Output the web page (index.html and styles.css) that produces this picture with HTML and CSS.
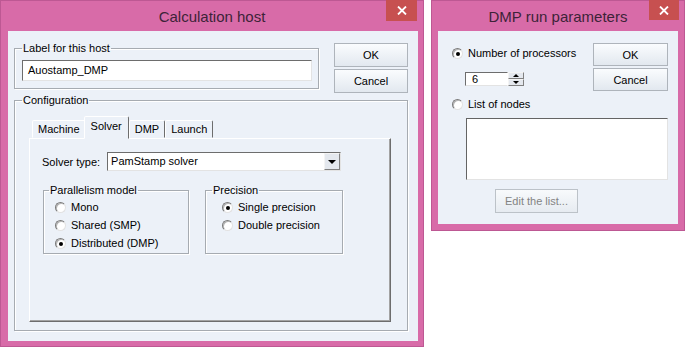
FILE: index.html
```html
<!DOCTYPE html>
<html lang="en">

<head>
    <meta charset="UTF-8">
    <title>Calculation host</title>
    <link rel="stylesheet" href="styles.css">
</head>

<body>
    <!-- Main dialog -->
    <div class="window window-host">
        <div class="titlebar">
            Calculation host
            <span class="close-btn">
                <svg width="10" height="9" viewBox="0 0 10 9"><path d="M1 0.5 L9 8.5 M9 0.5 L1 8.5" stroke="#fff" stroke-width="1.8" fill="none"/></svg>
            </span>
        </div>
        <div class="client host-client">
            <div class="host-row">
                <fieldset class="group group-label">
                    <legend>Label for this host</legend>
                    <div class="textbox">Auostamp_DMP</div>
                </fieldset>
                <div class="btn-col">
                    <button class="btn">OK</button>
                    <button class="btn">Cancel</button>
                </div>
            </div>

            <fieldset class="group group-config">
                <legend>Configuration</legend>
                <div class="tabs">
                    <span class="tab">Machine</span>
                    <span class="tab tab-active">Solver</span>
                    <span class="tab">DMP</span>
                    <span class="tab">Launch</span>
                </div>
                <div class="tab-panel">
                    <div class="solver-row">
                        <span>Solver type:</span>
                        <div class="select">
                            <span class="select-value">PamStamp solver</span>
                            <span class="select-arrow"></span>
                        </div>
                    </div>
                    <div class="groups-row">
                        <fieldset class="group group-parallel">
                            <legend>Parallelism model</legend>
                            <div class="radio-list">
                                <label class="radio-row"><span class="radio"></span>Mono</label>
                                <label class="radio-row"><span class="radio"></span>Shared (SMP)</label>
                                <label class="radio-row"><span class="radio checked"></span>Distributed (DMP)</label>
                            </div>
                        </fieldset>
                        <fieldset class="group group-precision">
                            <legend>Precision</legend>
                            <div class="radio-list">
                                <label class="radio-row"><span class="radio checked"></span>Single precision</label>
                                <label class="radio-row"><span class="radio"></span>Double precision</label>
                            </div>
                        </fieldset>
                    </div>
                </div>
            </fieldset>
        </div>
    </div>

    <!-- DMP parameters dialog -->
    <div class="window window-dmp">
        <div class="titlebar">
            DMP run parameters
            <span class="close-btn">
                <svg width="10" height="9" viewBox="0 0 10 9"><path d="M1 0.5 L9 8.5 M9 0.5 L1 8.5" stroke="#fff" stroke-width="1.8" fill="none"/></svg>
            </span>
        </div>
        <div class="client dmp-client">
            <div class="dmp-top">
                <div class="dmp-procs">
                    <label class="radio-row"><span class="radio checked"></span>Number of processors</label>
                    <div class="spin">
                        <span class="spin-value">6</span>
                        <span class="spin-arrows">
                            <span class="spin-up"></span>
                            <span class="spin-down"></span>
                        </span>
                    </div>
                </div>
                <div class="btn-col btn-col-dmp">
                    <button class="btn">OK</button>
                    <button class="btn">Cancel</button>
                </div>
            </div>
            <label class="radio-row nodes-row"><span class="radio"></span>List of nodes</label>
            <div class="listbox"></div>
            <button class="btn btn-edit" disabled>Edit the list...</button>
        </div>
    </div>
</body>

</html>
```

FILE: styles.css
```css
/* Two Windows 8 style dialogs side by side */
body {
    margin: 0;
    background-color: #fff;
    font-family: 'Liberation Sans', Arial, sans-serif;
    font-size: 11px;
    color: #000;
    display: flex;
    align-items: flex-start;
    gap: 7px;
}

.window {
    position: relative;
    box-sizing: border-box;
    display: flex;
    flex-direction: column;
    background-color: #d86ba8;
    border: 1px solid #bd5893;
}

.window-host {
    width: 424px;
    height: 347px;
}

.window-dmp {
    width: 254px;
    height: 231px;
}

.titlebar {
    height: 30px;
    display: flex;
    align-items: center;
    justify-content: center;
    font-size: 15px;
    color: #3d2338;
}

.close-btn {
    position: absolute;
    top: -1px;
    right: 6px;
    width: 31px;
    height: 21px;
    background-color: #c75050;
    display: flex;
    align-items: center;
    justify-content: center;
}

.window-dmp .close-btn {
    right: 5px;
    width: 30px;
    height: 20px;
}

.client {
    flex: 1;
    background-color: #ecf1f8;
    box-sizing: border-box;
}

.host-client {
    margin: 0 5px 5px 7px;
    padding: 11px 10px 0 6px;
}

/* Group boxes */
.group {
    margin: 0;
    min-width: 0;
    border: 1px solid #a6abb1;
    box-shadow: inset 1px 1px 0 #fff, 1px 1px 0 #fff;
    padding: 0 6px 1px 7px;
}

.group legend {
    padding: 0 1px;
    line-height: 13px;
}

.host-row {
    display: flex;
    justify-content: space-between;
    align-items: flex-start;
}

.group-label {
    width: 305px;
    box-sizing: border-box;
    padding: 5px 6px 7px 7px;
}

.textbox {
    height: 21px;
    box-sizing: border-box;
    background-color: #fff;
    border: 1px solid;
    border-color: #6d6d6d #e3e3e3 #e3e3e3 #6d6d6d;
    padding-left: 5px;
    line-height: 19px;
}

.btn-col {
    display: flex;
    flex-direction: column;
    gap: 2px;
    width: 74px;
    margin-top: 1px;
}

.btn {
    height: 24px;
    padding: 0;
    font-family: inherit;
    font-size: 11px;
    color: #000;
    border: 1px solid #aeb4bb;
    background: linear-gradient(#fafcfe, #e2e8ef);
}

.btn:disabled {
    color: #838383;
    border-color: #bcc2c8;
    background: linear-gradient(#f8fafc, #e6ebf1);
}

/* Configuration group with tabs */
.group-config {
    margin-top: 1px;
    height: 237px;
    box-sizing: border-box;
    padding: 9px 7px 8px 7px;
}

.tabs {
    display: flex;
    align-items: flex-end;
    height: 22px;
    margin-left: 7px;
    padding-left: 3px;
}

.tab {
    position: relative;
    height: 18px;
    box-sizing: border-box;
    padding: 0 5px;
    line-height: 17px;
    background-color: #ecf1f8;
    border: 1px solid;
    border-color: #fff #6d6d6d transparent #fff;
    border-radius: 2px 2px 0 0;
}

.tab-active {
    z-index: 1;
    height: 23px;
    margin: 0 -1px -1px -2px;
    padding: 0 6px;
    line-height: 18px;
}

.tab-active + .tab {
    margin-left: 1px;
}

.tab-panel {
    margin: 0 9px 0 7px;
    height: 184px;
    box-sizing: border-box;
    border: 1px solid;
    border-color: #fff #6d6d6d #6d6d6d #fff;
    box-shadow: inset -1px -1px 0 #a3a3a3;
    padding: 13px 0 0 12px;
}

.solver-row {
    display: flex;
    align-items: center;
    gap: 7px;
}

.select {
    width: 234px;
    height: 19px;
    box-sizing: border-box;
    display: flex;
    background-color: #fff;
    border: 1px solid;
    border-color: #6d6d6d #e3e3e3 #e3e3e3 #6d6d6d;
}

.select-value {
    flex: 1;
    padding-left: 3px;
    line-height: 17px;
}

.select-arrow {
    position: relative;
    width: 16px;
    box-sizing: border-box;
    border: 1px solid;
    border-color: #f4f4f4 #808080 #808080 #f4f4f4;
    background-color: #e4e8ee;
}

.select-arrow::after {
    content: '';
    position: absolute;
    left: 3px;
    top: 6px;
    border-left: 4px solid transparent;
    border-right: 4px solid transparent;
    border-top: 4px solid #000;
}

.groups-row {
    display: flex;
    gap: 16px;
    margin-top: 13px;
    padding-left: 1px;
}

.group-parallel {
    width: 146px;
    box-sizing: border-box;
    padding-left: 5px;
}

.group-precision {
    width: 138px;
    box-sizing: border-box;
    padding-left: 6px;
}

.radio-list {
    padding-top: 1px;
    margin-left: 6px;
}

.group-precision .radio-list {
    margin-left: 10px;
}

.radio-row {
    display: flex;
    align-items: center;
    gap: 5px;
    height: 18px;
}

.radio {
    position: relative;
    width: 11px;
    height: 11px;
    box-sizing: border-box;
    border-radius: 50%;
    background-color: #fff;
    border: 1px solid;
    border-color: #7a7a7a #e2e2e2 #e2e2e2 #7a7a7a;
    box-shadow: inset 1px 1px 0 #b5b5b5;
}

.radio.checked::after {
    content: '';
    position: absolute;
    left: 3px;
    top: 3px;
    width: 4px;
    height: 4px;
    border-radius: 50%;
    background-color: #000;
}

/* DMP dialog */
.dmp-client {
    margin: 0 6px 6px 6px;
    padding: 12px 10px 0 14px;
}

.dmp-top {
    display: flex;
    justify-content: space-between;
    align-items: flex-start;
}

.dmp-procs .radio-row {
    margin-top: 1px;
}

.btn-col-dmp {
    width: 75px;
    margin-top: 0;
}

.btn-col-dmp .btn {
    height: 23px;
}

.spin {
    display: flex;
    height: 14px;
    margin: 10px 0 0 13px;
}

.spin-value {
    width: 43px;
    box-sizing: border-box;
    background-color: #fff;
    border: 1px solid;
    border-color: #6d6d6d #fff #e3e3e3 #6d6d6d;
    padding-left: 6px;
    line-height: 12px;
}

.spin-arrows {
    width: 16px;
    display: flex;
    flex-direction: column;
}

.spin-up,
.spin-down {
    position: relative;
    flex: 1;
    box-sizing: border-box;
    border: 1px solid;
    border-color: #f4f4f4 #808080 #808080 #f4f4f4;
    background-color: #e4e8ee;
}

.spin-up::after,
.spin-down::after {
    content: '';
    position: absolute;
    left: 4px;
    top: 1px;
    border-left: 3px solid transparent;
    border-right: 3px solid transparent;
}

.spin-up::after {
    border-bottom: 3px solid #000;
}

.spin-down::after {
    border-top: 3px solid #000;
}

.nodes-row {
    margin-top: 6px;
    height: 14px;
}

.listbox {
    width: 202px;
    height: 62px;
    box-sizing: border-box;
    margin: 7px 0 0 14px;
    background-color: #fff;
    border: 1px solid;
    border-color: #646464 #e3e3e3 #e3e3e3 #646464;
}

.btn-edit {
    display: block;
    width: 83px;
    margin: 9px 0 0 43px;
}
```
